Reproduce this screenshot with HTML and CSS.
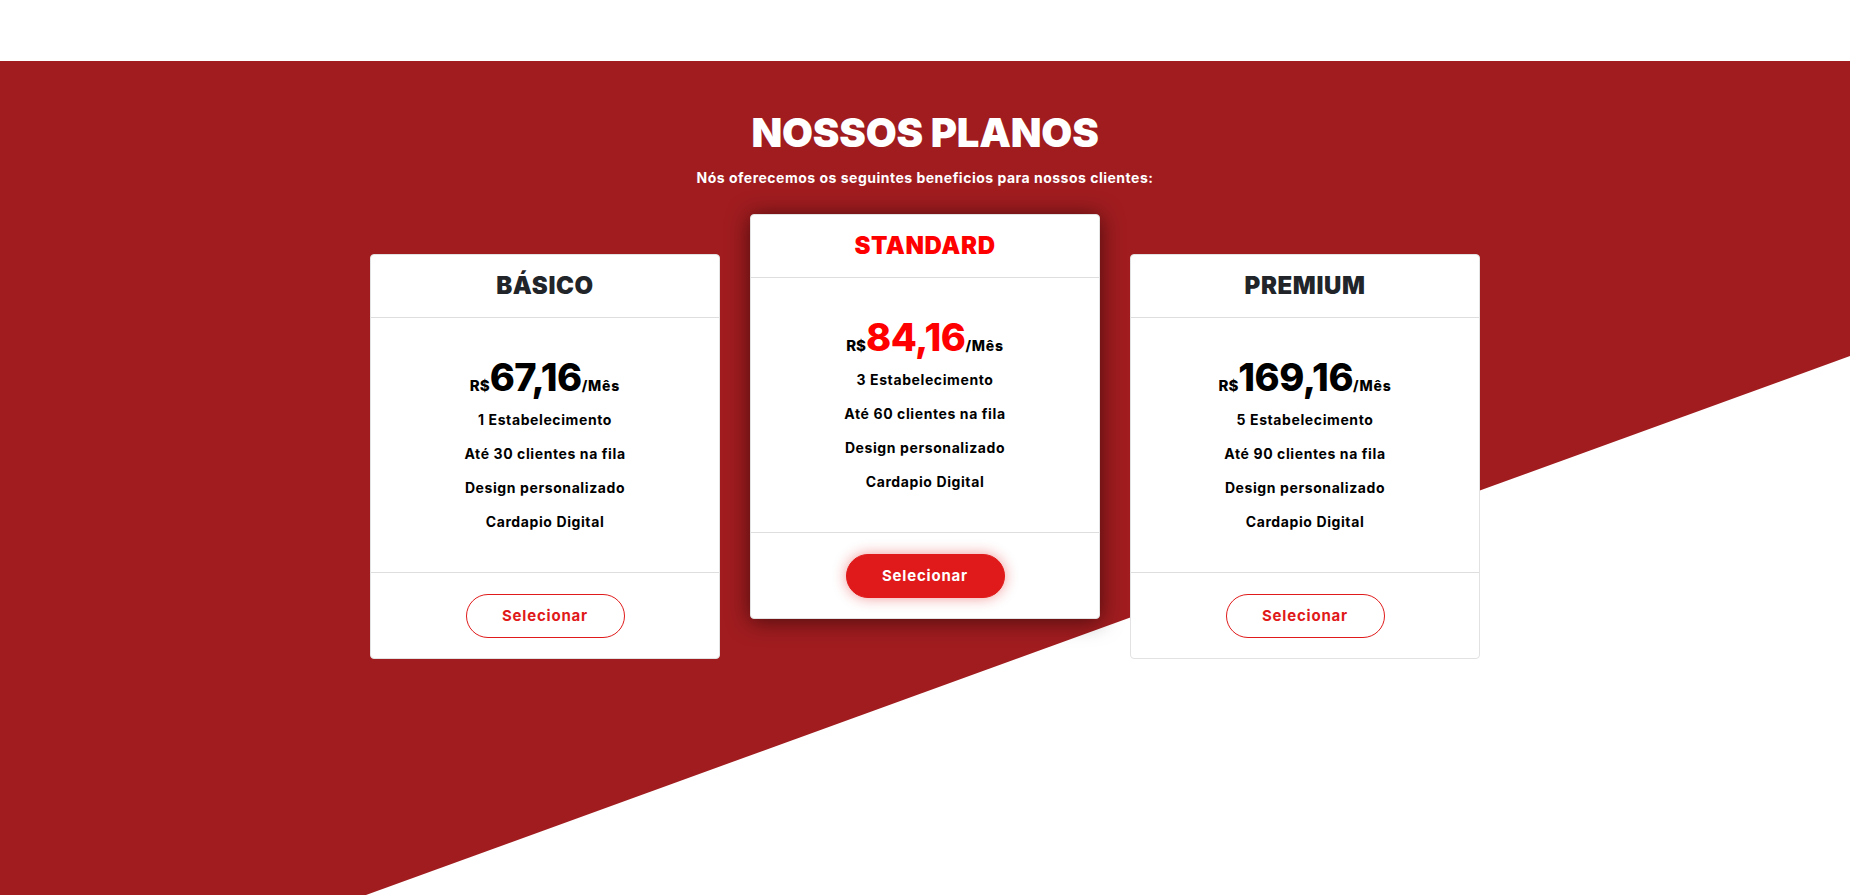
FILE: index.html
```html
<!DOCTYPE html>
<html lang="pt-BR">
<head>
<meta charset="utf-8">
<title>Nossos Planos</title>
<link rel="stylesheet" href="styles.css">
</head>
<body>
<div class="topbar"></div>
<section class="plans">
  <h1 class="plans-title">NOSSOS PLANOS</h1>
  <p class="plans-sub">Nós oferecemos os seguintes beneficios para nossos clientes:</p>
  <div class="plans-row">
    <div class="card">
      <div class="card-head"><h2 class="card-title">BÁSICO</h2></div>
      <div class="card-body">
        <div class="price"><span class="cur">R$</span><span class="amount">67,16</span><span class="per">/Mês</span></div>
        <ul class="features">
          <li>1 Estabelecimento</li>
          <li>Até 30 clientes na fila</li>
          <li>Design personalizado</li>
          <li>Cardapio Digital</li>
        </ul>
      </div>
      <div class="card-foot"><button class="btn btn-outline">Selecionar</button></div>
    </div>
    <div class="card card-featured">
      <div class="card-head"><h2 class="card-title title-red">STANDARD</h2></div>
      <div class="card-body">
        <div class="price"><span class="cur">R$</span><span class="amount amount-red">84,16</span><span class="per">/Mês</span></div>
        <ul class="features">
          <li>3 Estabelecimento</li>
          <li>Até 60 clientes na fila</li>
          <li>Design personalizado</li>
          <li>Cardapio Digital</li>
        </ul>
      </div>
      <div class="card-foot"><button class="btn btn-filled">Selecionar</button></div>
    </div>
    <div class="card">
      <div class="card-head"><h2 class="card-title">PREMIUM</h2></div>
      <div class="card-body">
        <div class="price"><span class="cur">R$</span><span class="amount">169,16</span><span class="per">/Mês</span></div>
        <ul class="features">
          <li>5 Estabelecimento</li>
          <li>Até 90 clientes na fila</li>
          <li>Design personalizado</li>
          <li>Cardapio Digital</li>
        </ul>
      </div>
      <div class="card-foot"><button class="btn btn-outline">Selecionar</button></div>
    </div>
  </div>
</section>
</body>
</html>
```
FILE: styles.css
```css
* { box-sizing: border-box; }
html, body { margin: 0; padding: 0; background: #fff; overflow: hidden; }
body { font-family: Inter, "Liberation Sans", sans-serif; color: #000; }

.topbar { height: 61px; background: #fff; }

.plans {
  position: relative;
  isolation: isolate;
  height: 834px;
  display: flex;
  flex-direction: column;
  align-items: center;
  padding-top: 48px;
}

.plans::before {
  content: "";
  position: absolute;
  inset: 0;
  z-index: -1;
  background: #a01c1f;
  clip-path: polygon(0 0, 100% 0, 100% 295px, 366px 834px, 0 834px);
}

.plans-title {
  margin: 0;
  font-size: 40px;
  line-height: 48px;
  font-weight: 900;
  color: #fff;
  letter-spacing: -0.2px;
}

.plans-sub {
  margin: 12px 0 0;
  font-size: 14px;
  line-height: 18px;
  font-weight: 700;
  color: #fff;
  letter-spacing: 0.5px;
}

.plans-row {
  display: flex;
  gap: 30px;
  align-items: flex-start;
  margin-top: 27px;
}

.card {
  width: 350px;
  height: 405px;
  background: #fff;
  border: 1px solid #e2e2e2;
  border-radius: 4px;
  margin-top: 40px;
  display: flex;
  flex-direction: column;
}

.card-featured {
  margin-top: 0;
  box-shadow: 0 2px 22px rgba(0, 0, 0, 0.55);
}

.card-head {
  height: 63px;
  border-bottom: 1px solid #dedede;
  display: flex;
  justify-content: center;
  padding-top: 16px;
}

.card-title {
  margin: 0;
  font-size: 24px;
  line-height: 30px;
  font-weight: 900;
  color: #212529;
  letter-spacing: 0.6px;
}

.title-red { color: #ff0000; }

.card-body {
  flex: 1;
  border-bottom: 1px solid #dedede;
  padding-top: 42px;
  text-align: center;
}

.price {
  display: flex;
  justify-content: center;
  align-items: baseline;
  line-height: 34px;
  font-weight: 800;
}
.cur { font-size: 15px; }
.amount { font-size: 38px; letter-spacing: -0.5px; }
.amount-red { color: #ff0000; }
.per { font-size: 14px; letter-spacing: 0.8px; }

.features {
  list-style: none;
  margin: 0;
  padding: 0;
}
.features li {
  font-size: 14px;
  font-weight: 700;
  line-height: 34px;
  letter-spacing: 0.6px;
}

.card-foot {
  height: 85px;
  display: flex;
  justify-content: center;
  align-items: center;
}

.btn {
  width: 159px;
  height: 44px;
  border-radius: 22px;
  font-family: Inter, "Liberation Sans", sans-serif;
  font-size: 15px;
  font-weight: 700;
  letter-spacing: 0.8px;
  cursor: pointer;
}
.btn-outline {
  background: #fff;
  border: 1px solid #e01a1a;
  color: #e01a1a;
}
.btn-filled {
  background: #e01a1a;
  border: 1px solid #e01a1a;
  color: #fff;
  box-shadow: 0 0 14px rgba(224, 26, 26, 0.45);
}
```
